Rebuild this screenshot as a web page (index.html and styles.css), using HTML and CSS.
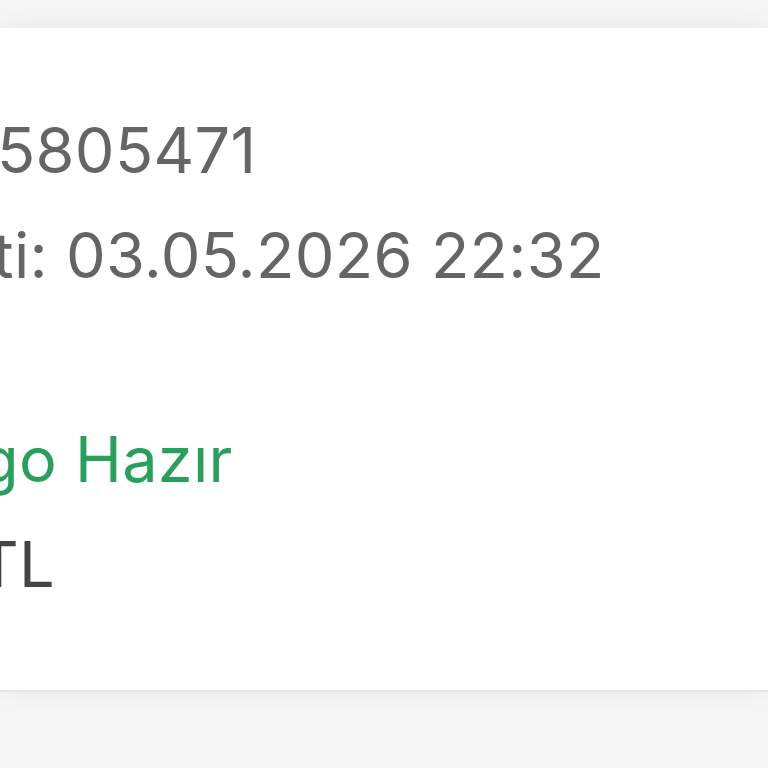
FILE: index.html
```html
<!DOCTYPE html>
<html lang="tr">
<head>
<meta charset="utf-8">
<title>Sipariş</title>
<link rel="stylesheet" href="styles.css">
</head>
<body>
<div class="card">
  <div class="info">
    <p class="line line-no">5805471</p>
    <p class="line line-date">ti: 03.05.2026 22:32</p>
  </div>
  <div class="info">
    <p class="line line-status">go Hazır</p>
    <p class="line line-total">TL</p>
  </div>
</div>
</body>
</html>
```
FILE: styles.css
```css
html, body {
  margin: 0;
  padding: 0;
}
body {
  background: #f6f6f6;
  font-family: Inter, "Noto Sans", sans-serif;
  overflow: hidden;
  height: 768px;
}
.card {
  margin-top: 28px;
  height: 662px;
  box-sizing: border-box;
  background: #ffffff;
  box-shadow: 0 0 0 0 transparent, 0 2px 0 #e6e6e6, 0 0 24px rgba(0, 0, 0, 0.07);
  padding-top: 70px;
  display: flex;
  flex-direction: column;
  gap: 99px;
}
.info {
  display: flex;
  flex-direction: column;
}
.line {
  margin: 0;
  font-size: 63px;
  line-height: 105px;
  letter-spacing: 0.3px;
  color: #656565;
  white-space: nowrap;
}
.line-no { text-indent: -3px; }
.line-date { text-indent: -7px; }
.line-status { color: #27a05c; text-indent: -20px; }
.line-total { color: #444444; text-indent: -22px; }
```
